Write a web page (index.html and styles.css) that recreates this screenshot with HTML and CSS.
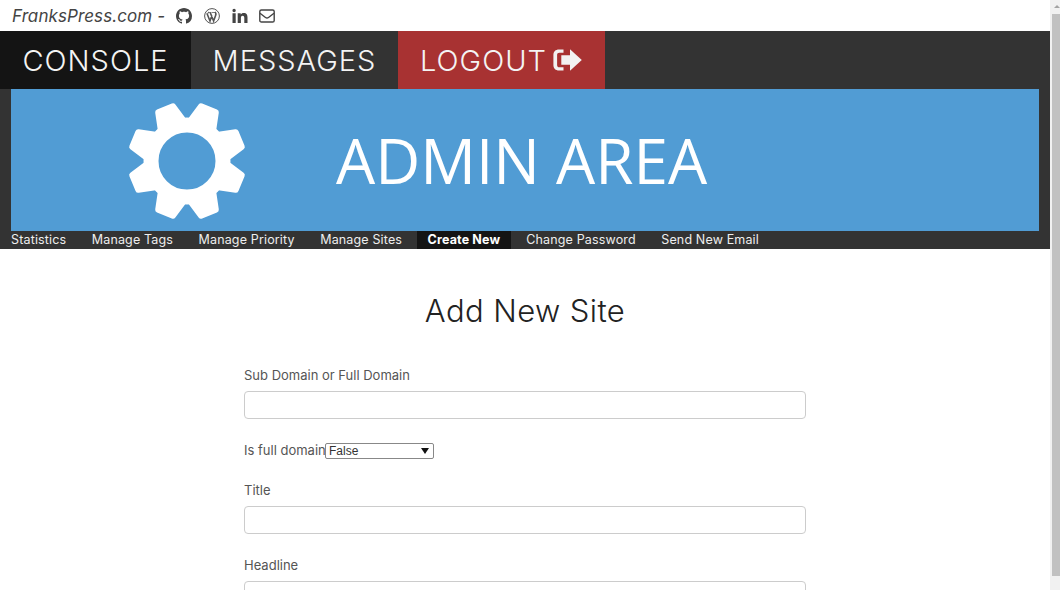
FILE: index.html
```html
<!DOCTYPE html>
<html lang="en">
<head>
  <meta charset="UTF-8">
  <title>Admin Area - Add New Site</title>
  <link rel="stylesheet" href="styles.css">
</head>
<body>
  <div class="page">
    <div class="top-bar">
      <em class="brand">FranksPress.com -</em>
      <a class="social" href="#">
        <svg width="16" height="16" viewBox="0 0 16 16"><path fill="#444" d="M8 0C3.58 0 0 3.58 0 8c0 3.54 2.29 6.53 5.47 7.59.4.07.55-.17.55-.38 0-.19-.01-.82-.01-1.49-2.01.37-2.53-.49-2.69-.94-.09-.23-.48-.94-.82-1.13-.28-.15-.68-.52-.01-.53.63-.01 1.08.58 1.23.82.72 1.21 1.87.87 2.33.66.07-.52.28-.87.51-1.07-1.78-.2-3.64-.89-3.64-3.95 0-.87.31-1.59.82-2.15-.08-.2-.36-1.02.08-2.12 0 0 .67-.21 2.2.82.64-.18 1.32-.27 2-.27.68 0 1.36.09 2 .27 1.53-1.04 2.2-.82 2.2-.82.44 1.1.16 1.92.08 2.12.51.56.82 1.27.82 2.15 0 3.07-1.87 3.75-3.65 3.95.29.25.54.73.54 1.48 0 1.07-.01 1.93-.01 2.2 0 .21.15.46.55.38A8.013 8.013 0 0016 8c0-4.42-3.58-8-8-8z"/></svg>
      </a>
      <a class="social" href="#">
        <svg width="16" height="16" viewBox="0 0 16 16"><circle cx="8" cy="8" r="7.4" fill="none" stroke="#555" stroke-width="1"/><path fill="none" stroke="#555" stroke-width="1.6" d="M2.900 5.200 6 13l1.900-5.600M5 4.600h-.6M6.200 4.500 9.600 13l2-5.500c.6-1.600.3-2.500-.4-3.600"/><path fill="#555" d="M3.800 4.200h3.300v.9H3.800zM7.600 4.200h3.600v.9H7.600z"/></svg>
      </a>
      <a class="social" href="#">
        <svg width="16" height="16" viewBox="0 0 16 16"><path fill="#444" d="M.5 5.300h3.200V15H.5zM2.100.8a1.700 1.700 0 1 1 0 3.400 1.700 1.700 0 0 1 0-3.400zM5.700 5.300h3v1.300c.5-.9 1.500-1.600 3-1.600 3 0 3.800 1.900 3.800 4.600V15h-3.200V10.200c0-1.300-.3-2.500-1.700-2.500s-1.700 1.100-1.700 2.400V15H5.700z"/></svg>
      </a>
      <a class="social" href="#">
        <svg width="16" height="16" viewBox="0 0 16 16"><rect x=".8" y="2" width="14.400" height="12" rx="1.600" fill="none" stroke="#444" stroke-width="1.400"/><path fill="none" stroke="#444" stroke-width="1.400" d="M1 5.200 6.500 9.500c.9.700 2.100.7 3 0L15 5.200"/></svg>
      </a>
    </div>

    <nav class="main-nav">
      <a class="main-link active" href="#">CONSOLE</a>
      <a class="main-link" href="#">MESSAGES</a>
      <a class="main-link logout" href="#">LOGOUT
        <svg width="30" height="24" viewBox="0 0 30 24"><path fill="#f2f2f2" d="M10.500 1.500v3.200H6.400c-1.500 0-2.300.9-2.300 2.300v10c0 1.500.8 2.300 2.300 2.300h4.100v3.200H6c-3.500 0-5.600-2.100-5.600-5.500V7c0-3.400 2.100-5.500 5.600-5.500zM17 1.300l11.800 10.700L17 22.700v-6H8.300V7.300H17z"/></svg>
      </a>
    </nav>

    <header class="banner-wrap">
      <div class="banner">
        <svg class="gear" width="120" height="120" viewBox="0 0 120 120">
          <g fill="#fff" stroke="#fff" stroke-width="6" stroke-linejoin="round">
            <path transform="rotate(22.500 60 60)" d="M47 24 52 4H68L73 24Z"/>
            <path transform="rotate(67.500 60 60)" d="M47 24 52 4H68L73 24Z"/>
            <path transform="rotate(112.500 60 60)" d="M47 24 52 4H68L73 24Z"/>
            <path transform="rotate(157.500 60 60)" d="M47 24 52 4H68L73 24Z"/>
            <path transform="rotate(202.500 60 60)" d="M47 24 52 4H68L73 24Z"/>
            <path transform="rotate(247.500 60 60)" d="M47 24 52 4H68L73 24Z"/>
            <path transform="rotate(292.500 60 60)" d="M47 24 52 4H68L73 24Z"/>
            <path transform="rotate(337.500 60 60)" d="M47 24 52 4H68L73 24Z"/>
          </g>
          <circle cx="60" cy="60" r="36" fill="none" stroke="#fff" stroke-width="15"/>
        </svg>
        <span class="banner-title">ADMIN AREA</span>
      </div>
    </header>

    <nav class="sub-nav">
      <a class="sub-link" href="#">Statistics</a>
      <a class="sub-link" href="#">Manage Tags</a>
      <a class="sub-link" href="#">Manage Priority</a>
      <a class="sub-link" href="#">Manage Sites</a>
      <a class="sub-link active" href="#">Create New</a>
      <a class="sub-link" href="#">Change Password</a>
      <a class="sub-link" href="#">Send New Email</a>
    </nav>

    <main class="content">
      <h1>Add New Site</h1>
      <form class="site-form">
        <div class="field">
          <label for="domain">Sub Domain or Full Domain</label>
          <input id="domain" type="text">
        </div>
        <div class="field inline">
          <label for="isfull">Is full domain</label>
          <select id="isfull">
            <option>False</option>
            <option>True</option>
          </select>
        </div>
        <div class="field">
          <label for="title">Title</label>
          <input id="title" type="text">
        </div>
        <div class="field">
          <label for="headline">Headline</label>
          <input id="headline" type="text">
        </div>
      </form>
    </main>
  </div>

  <!-- scrollbar -->
  <div class="scrollbar">
    <div class="arrow up"></div>
    <div class="thumb"></div>
    <div class="arrow down"></div>
  </div>
</body>
</html>
```

FILE: styles.css
```css
html, body {
  margin: 0;
  height: 590px;
  overflow: hidden;
  background-color: white;
  font-family: Inter, "Liberation Sans", sans-serif;
  color: #333;
}

a {
  text-decoration: none;
}

.page {
  width: 1050px;
}

.top-bar {
  display: flex;
  align-items: center;
  height: 31px;
  padding-left: 12px;
  box-sizing: border-box;
}

.brand {
  font-size: 17px;
  letter-spacing: 0.1px;
  color: #444;
  margin-right: 11px;
  white-space: nowrap;
}

.social {
  display: flex;
  margin-right: 12px;
}

.social:nth-child(4) {
  margin-right: 11px;
}

.main-nav {
  display: flex;
  height: 58px;
  background-color: #333;
}

.main-link {
  display: flex;
  align-items: center;
  justify-content: center;
  gap: 6px;
  color: #f4f4f4;
  font-size: 29px;
  font-weight: 300;
  letter-spacing: 1px;
}

.main-link:nth-child(1) { width: 191px; }
.main-link:nth-child(2) { width: 207px; }
.main-link:nth-child(3) { width: 207px; }

.main-link.active {
  background-color: #141414;
}

.logout {
  background-color: #a83232;
}

.banner-wrap {
  background-color: #333;
  padding: 0 11px;
}

.banner {
  display: flex;
  align-items: center;
  height: 142px;
  padding-left: 116px;
  background-color: #519cd4;
}

.gear {
  margin-top: 2px;
  margin-right: 89px;
}

.banner-title {
  font-family: "Open Sans", sans-serif;
  font-size: 62px;
  font-weight: 500;
  color: white;
  white-space: nowrap;
}

.sub-nav {
  display: flex;
  height: 18px;
  background-color: #333;
  padding-left: 11px;
}

.sub-link {
  display: flex;
  align-items: center;
  padding-bottom: 2px;
  box-sizing: border-box;
  margin-right: 25.500px;
  color: #eee;
  font-size: 12.500px;
  letter-spacing: 0.15px;
  white-space: nowrap;
}

.sub-link.active {
  background-color: #141414;
  color: white;
  font-weight: 700;
  padding-left: 11px;
  padding-right: 11px;
  margin-left: -11px;
  margin-right: 15px;
}

.content {
  padding-top: 44px;
}

h1 {
  margin: 0 0 38px;
  text-align: center;
  font-size: 31px;
  line-height: 36px;
  font-weight: 300;
  letter-spacing: 0.4px;
  color: #222;
}

.site-form {
  width: 562px;
  margin-left: 244px;
}

.field {
  margin-bottom: 23px;
}

.field label {
  display: block;
  font-size: 13px;
  line-height: 16px;
  color: #555;
  margin-bottom: 8px;
}

.field input {
  display: block;
  width: 100%;
  height: 28px;
  box-sizing: border-box;
  border: 1px solid #ccc;
  border-radius: 4px;
  background-color: white;
}

.field.inline {
  display: flex;
  align-items: center;
  height: 16px;
  margin-top: 24px;
}

.field.inline label {
  margin-bottom: 2px;
  width: 81px;
  white-space: nowrap;
}

.field select {
  appearance: none;
  width: 109px;
  height: 16px;
  box-sizing: border-box;
  padding: 0 0 0 3px;
  border: 1px solid #888;
  border-radius: 2px;
  font-family: "Liberation Sans", sans-serif;
  font-size: 12px;
  line-height: 14px;
  color: #333;
  background-color: white;
  background-image: url("data:image/svg+xml,%3Csvg xmlns='http://www.w3.org/2000/svg' width='8' height='6'%3E%3Cpath d='M0 0H8L4 6Z' fill='%23111'/%3E%3C/svg%3E");
  background-repeat: no-repeat;
  background-position: 95px 4px;
}

.scrollbar {
  position: fixed;
  top: 0;
  right: 0;
  bottom: 0;
  width: 10px;
  display: flex;
  flex-direction: column;
  background-color: #f1f1f1;
}

.thumb {
  flex: 1;
  margin-left: 2px;
  background-color: #c1c1c1;
}

.arrow {
  height: 14px;
  position: relative;
}

.arrow.up::after {
  content: "";
  position: absolute;
  left: 4px;
  top: 5px;
  border-left: 3px solid transparent;
  border-right: 3px solid transparent;
  border-bottom: 3px solid #a3a3a3;
}
```
